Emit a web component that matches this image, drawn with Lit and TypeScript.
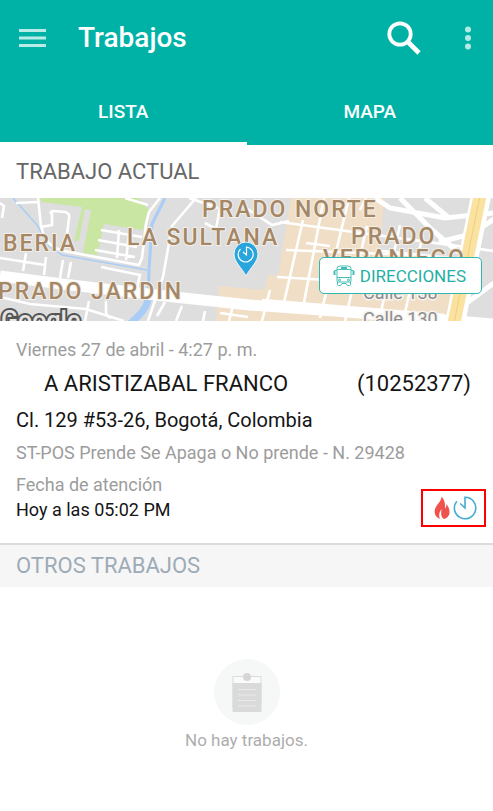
import { LitElement, html, css } from "lit";
import { customElement, state } from "lit/decorators.js";
import { classMap } from "lit/directives/class-map.js";

@customElement("job-map")
class JobMap extends LitElement {
  static styles = css`
    :host {
      display: block;
      position: relative;
      height: 123px;
      overflow: hidden;
      background: #dedede;
    }
    .map {
      display: block;
      width: 100%;
      height: 100%;
    }
    .place {
      font: 500 23px Roboto, sans-serif;
      letter-spacing: 2px;
      fill: #a58765;
      stroke: #f3efe9;
      stroke-width: 2px;
      paint-order: stroke;
    }
    .street {
      font: 400 18px Roboto, sans-serif;
      fill: #8c8c8c;
      stroke: #f6f3ee;
      stroke-width: 3px;
      paint-order: stroke;
    }
    .brand {
      font: 500 25px Roboto, sans-serif;
      fill: #e4e4e4;
      stroke: #555;
      stroke-width: 4px;
      paint-order: stroke;
    }
    .directions {
      position: absolute;
      right: 11px;
      top: 59px;
      display: flex;
      align-items: center;
      gap: 5px;
      height: 37px;
      padding: 0 15px 0 13px;
      border: 1px solid #2fb9ae;
      border-radius: 5px;
      background: #fff;
      color: #1fb0a5;
      font: 400 17px Roboto, sans-serif;
    }
  `;

  render() {
    return html`
      <svg class="map" viewBox="0 0 493 123" preserveAspectRatio="xMidYMid slice" role="img" aria-label="Mapa">
        <rect width="493" height="123" fill="#dedede" />
        <path fill="#f0dfc6" d="M291 0H384L380 52L461 62L450 123H216L219 88L264 92L269 76L278 78Z" />
        <path fill="#c9e6a2" d="M40 0H138L149 12L143 32L104 26L97 57L83 55L91 12L85 11L79 42L74 44L82 9L41 4Z" />
        <g fill="none" stroke="#a9cdf6" stroke-width="1.500">
          <path d="M13 0L37 27L49 48L62 57L147 72" />
          <path stroke-width="3" d="M165 0L152 26L149 72L148 102" />
          <path stroke-width="7" d="M148 102C146 112 138 118 130 126" />
        </g>
        <g fill="none" stroke="#fff" stroke-width="2.600">
          <path d="M38 0L41 28C45 45 52 50 64 53L139 67L142 60L146 26L149 14L160 0" />
          <path d="M0 5L4 8L2 20M16 5L38 4M51 16Q50 13 54 13L65 14Q70 15 69 20L67 36M52 14V27L41 29" />
          <path d="M101 32L142 39M98 42L137 49M95 52L135 59M119 32L117 60M129 35L126 62M125 0L148 7" />
          <path d="M0 60L45 67M26 55L23 73M46 59L44 77M63 62L60 80M71 64L68 80M101 69L140 77L137 90" />
          <path d="M0 99L30 106L86 111L124 123M10 110L5 123M89 103L85 123M106 103V114Q107 121 113 119" />
          <path d="M196 0L172 28L163 79L148 123M189 0L218 10M205 25L216 31L220 10M165 104L157 118" />
          <path d="M182 108L176 123M205 113L203 123M220 115L248 119M233 108L229 123" />
          <path d="M246 10L272 27L289 23M280 24L494 53M286 52L414 57M277 79L410 87M270 92L262 123" />
          <path d="M303 22L282 113M324 0L302 115M349 0L320 120M367 28L345 123M400 27L379 123M421 45L403 123" />
          <path d="M262 102L444 117M306 45L330 48M360 70L442 78M382 53L450 60M366 0L360 12" />
        </g>
        <g fill="none" stroke="#fff">
          <path stroke-width="5" d="M375 0L390 10L445 20L494 15M400 0L431 31L458 54M425 0L448 19M439 44L472 36L494 21M460 110L494 85" />
          <path stroke-width="11" d="M0 78L62 86L165 98L250 107L335 113L494 126" />
          <path stroke-width="20" d="M481 -2L455 125" />
        </g>
        <path fill="none" stroke="#fae2a0" stroke-width="13" d="M480 -2L454 125" />
        <path fill="none" stroke="#f2cf7e" stroke-width="1" d="M480 -2L454 125" />
        <text class="street" x="363" y="101">Calle 138</text>
        <text class="street" x="363" y="127">Calle 130</text>
        <text class="place" x="202" y="19">PRADO NORTE</text>
        <text class="place" x="127" y="47">LA SULTANA</text>
        <text class="place" x="3" y="53">BERIA</text>
        <text class="place" x="-2" y="101">PRADO JARDIN</text>
        <text class="place" x="351" y="46">PRADO</text>
        <text class="place" x="323" y="68">VERANIEGO</text>
        <text class="brand" x="1" y="131">Google</text>
        <path fill="#27a5dc" stroke="#f4f4f4" stroke-width="1" d="M246 78C242 70 234 64 234 56A12 12 0 0 1 258 56C258 64 250 70 246 78Z" />
        <path fill="none" stroke="#fff" stroke-width="1.200" d="M240.500 51A7.500 7.500 0 1 0 246.500 49V57L243 54" />
      </svg>
      <button class="directions">
        <svg width="22" height="22" viewBox="0 0 22 22" fill="none" stroke="#45bfb6" stroke-width="1" aria-hidden="true">
          <path d="M4 16V3.500Q4 1 7 1H15Q18 1 18 3.500V16Q18 17 17 17H5Q4 17 4 16ZM4 4.500H18M4 12.500H18" />
          <path fill="#45bfb6" stroke="none" d="M8 2H14V4H8ZM0.500 6H2.500V10H0.500ZM19.500 6H21.500V10H19.500Z" />
          <path d="M4 5.500H1.700V6M18 5.500H20.300V6M4.500 17V19.500Q4.500 20.500 5.500 20.500H7.500L9 18.500H13L14.500 20.500H16.500Q17.500 20.500 17.500 19.500V17" />
          <circle cx="6.500" cy="15" r="1" /><circle cx="15.500" cy="15" r="1" />
        </svg>
        DIRECCIONES
      </button>
    `;
  }
}

@customElement("app-root")
class AppRoot extends LitElement {
  @state() tab = "LISTA";

  static styles = css`
    :host {
      display: block;
      min-height: 100vh;
      background: #fff;
      color: #151515;
      font-family: Roboto, sans-serif;
    }
    button {
      border: 0;
      padding: 0;
      background: none;
      color: inherit;
      font-family: inherit;
    }
    h1, h2, h3, p {
      margin: 0;
      font-weight: 400;
    }
    svg {
      display: block;
    }
    .top {
      background: #00b2a6;
      color: #fff;
    }
    .bar {
      display: flex;
      align-items: center;
      height: 76px;
      padding: 0 20px 0 19px;
    }
    .bar h1 {
      flex: 1;
      margin-left: 32px;
      font-size: 28px;
      font-weight: 500;
      line-height: 40px;
    }
    .more {
      margin-left: 42px;
    }
    .tabs {
      display: flex;
      height: 69px;
    }
    .tab {
      flex: 1;
      box-sizing: border-box;
      padding-top: 5px;
      border-bottom: 3px solid transparent;
      font-size: 19px;
      font-weight: 500;
    }
    .tab.active {
      border-bottom-color: #fff;
    }
    .heading {
      padding: 0 16px;
      font-size: 22px;
      line-height: 53px;
      color: #666;
    }
    .card {
      padding-top: 16px;
      border-bottom: 2px solid #dcdcdc;
    }
    .date, .detail {
      padding: 0 16px;
      font-size: 18px;
      line-height: 26px;
      color: #9c9c9c;
    }
    .detail {
      line-height: 36px;
    }
    .client {
      display: flex;
      justify-content: space-between;
      padding: 0 22px 0 44px;
      font-size: 22px;
      line-height: 42px;
    }
    .address {
      padding: 0 16px;
      font-size: 20px;
      line-height: 30px;
    }
    .foot {
      display: flex;
      justify-content: space-between;
      padding: 0 7px 16px 16px;
      font-size: 18px;
    }
    .label {
      line-height: 28px;
      color: #9c9c9c;
    }
    .due {
      line-height: 22px;
      padding-bottom: 6px;
    }
    .flags {
      align-self: flex-end;
      display: flex;
      align-items: center;
      justify-content: flex-end;
      gap: 3px;
      box-sizing: border-box;
      width: 65px;
      height: 38px;
      padding-right: 7px;
      border: 2px solid #f00;
    }
    .others {
      background: #f6f6f6;
      line-height: 42px;
      color: #9dabb7;
    }
    .empty {
      display: flex;
      flex-direction: column;
      align-items: center;
      padding: 72px 16px;
      font-size: 17px;
      line-height: 30px;
      color: #adadad;
    }
  `;

  renderTab(name: string) {
    const active = this.tab === name;
    return html`<button
      class=${classMap({ tab: true, active })}
      role="tab"
      aria-selected=${active ? "true" : "false"}
      @click=${() => (this.tab = name)}
    >${name}</button>`;
  }

  render() {
    return html`
      <header class="top">
        <div class="bar">
          <button aria-label="Menú">
            <svg width="27" height="20" viewBox="0 0 27 20" fill="#b9ece7">
              <path d="M0 1H27V4H0ZM0 8.500H27V11.500H0ZM0 16H27V19H0Z" />
            </svg>
          </button>
          <h1>Trabajos</h1>
          <button aria-label="Buscar">
            <svg width="34" height="34" viewBox="0 0 34 34" fill="none" stroke="#fff">
              <circle cx="13" cy="13" r="10.700" stroke-width="3.800" />
              <path stroke-width="4.600" d="M20.500 20.500L32 32" />
            </svg>
          </button>
          <button class="more" aria-label="Más opciones">
            <svg width="10" height="24" viewBox="0 0 10 24" fill="#b3eae5">
              <circle cx="5" cy="3.500" r="3" /><circle cx="5" cy="12" r="3" /><circle cx="5" cy="20.500" r="3" />
            </svg>
          </button>
        </div>
        <div class="tabs" role="tablist">${this.renderTab("LISTA")}${this.renderTab("MAPA")}</div>
      </header>
      <main>
        <h2 class="heading">TRABAJO ACTUAL</h2>
        <job-map></job-map>
        <article class="card">
          <p class="date">Viernes 27 de abril - 4:27 p. m.</p>
          <h3 class="client"><span>A ARISTIZABAL FRANCO</span><span>(10252377)</span></h3>
          <p class="address">Cl. 129 #53-26, Bogotá, Colombia</p>
          <p class="detail">ST-POS Prende Se Apaga o No prende - N. 29428</p>
          <div class="foot">
            <div>
              <p class="label">Fecha de atención</p>
              <p class="due">Hoy a las 05:02 PM</p>
            </div>
            <div class="flags">
              <svg width="16" height="24" viewBox="0 0 16 24" fill="#ef5350" role="img" aria-label="Urgente">
                <path d="M7.500 0.500C8 5 1 9.500 0.600 15C0.400 19 2.500 21.700 6 23C4.500 20 5 16.500 7.500 13C6.800 18 7 21 9.800 23C13 22.400 15.500 20 15.500 16C15.500 12.500 14 10 12.300 8C12.500 10.500 12 12 11 12.500C11.500 8 10.500 3.500 7.500 0.500Z" />
              </svg>
              <svg width="24" height="24" viewBox="0 0 24 24" fill="none" stroke="#45acd3" stroke-width="1.600" role="img" aria-label="Pendiente">
                <path d="M3.800 5.200A10.700 10.700 0 1 0 12 1.300V12L7.200 7.500" />
              </svg>
            </div>
          </div>
        </article>
        <h2 class="heading others">OTROS TRABAJOS</h2>
        <section class="empty">
          <svg width="66" height="66" viewBox="0 0 66 66" aria-hidden="true">
            <circle cx="33" cy="33" r="33" fill="#f6f8f7" />
            <rect x="19" y="17.500" width="28" height="30" fill="#f9faf9" stroke="#dcdcdc" />
            <path fill="#dadada" d="M18.500 24H47.500V53H18.500Z" />
            <circle cx="33" cy="18" r="4" fill="#d6d6d6" />
            <path stroke="#eaeaea" stroke-width="1.200" d="M24 30.500H42M24 36H42M24 41.500H42M24 47H42" />
          </svg>
          <p>No hay trabajos.</p>
        </section>
      </main>
    `;
  }
}
